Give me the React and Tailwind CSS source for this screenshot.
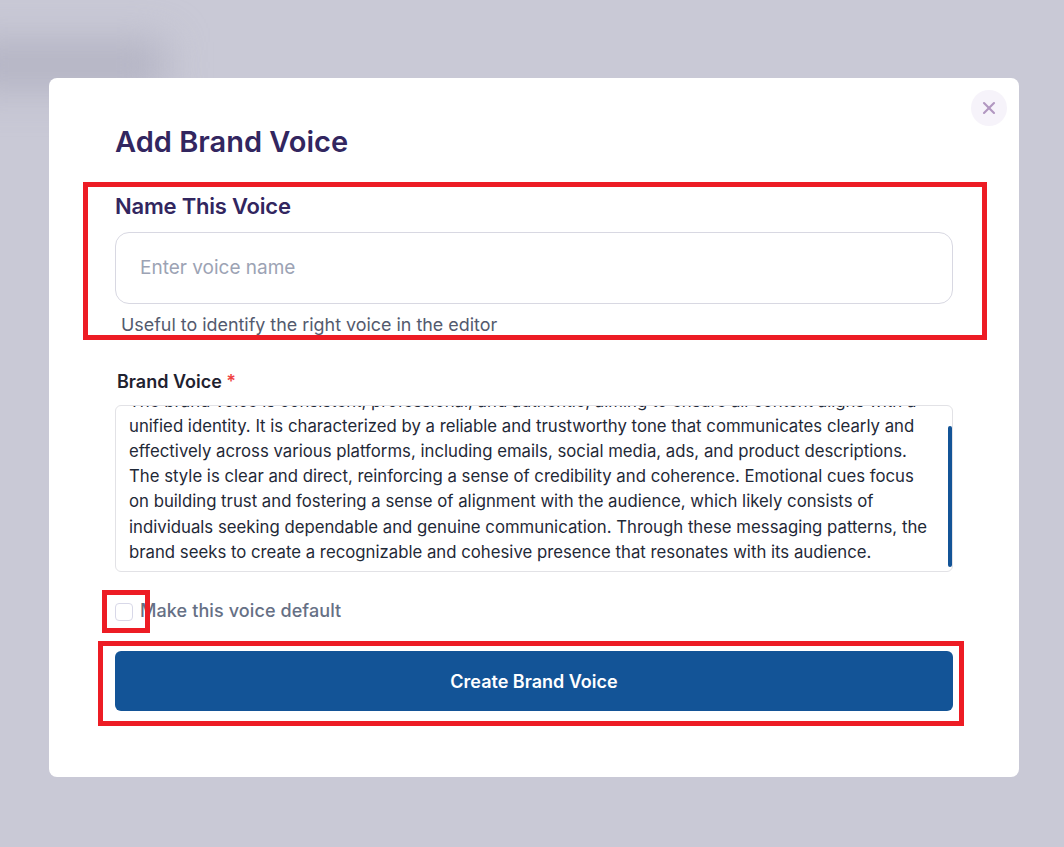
import React from "react";
import { X } from "lucide-react";

const BRAND_VOICE_TEXT =
  "The brand voice is consistent, professional, and authentic, aiming to ensure all content aligns with a unified identity. It is characterized by a reliable and trustworthy tone that communicates clearly and effectively across various platforms, including emails, social media, ads, and product descriptions. The style is clear and direct, reinforcing a sense of credibility and coherence. Emotional cues focus on building trust and fostering a sense of alignment with the audience, which likely consists of individuals seeking dependable and genuine communication. Through these messaging patterns, the brand seeks to create a recognizable and cohesive presence that resonates with its audience.";

const App = () => {
  return (
    <div className="relative h-[847px] w-full overflow-hidden bg-[#c9c9d6] font-['Inter',sans-serif] pl-[49px] pt-[78px]">
      {/* blurred page behind the overlay */}
      <div className="absolute left-[-40px] top-[42px] h-[46px] w-[205px] bg-[#b2b2c2] blur-[20px]" />

      <div className="relative w-[970px] h-[699px] bg-white rounded-lg px-[66px] pt-[46px]">
        <button className="absolute right-3 top-3 w-9 h-9 rounded-full bg-[#f6f3fa] flex items-center justify-center text-[#b197c0]">
          <X size={20} strokeWidth={2.5} />
        </button>

        <h1 className="text-[29px] leading-[36px] font-semibold text-[#32265f]">Add Brand Voice</h1>

        {/* annotated section */}
        <div className="relative mt-[31px]">
          <div className="absolute left-[-32px] right-[-34px] top-[-9px] h-[158px] border-[5px] border-[#ed1c24]" />
          <h2 className="text-[22px] leading-[30px] font-semibold text-[#32265f] tracking-[-0.2px]">Name This Voice</h2>
          <div className="mt-[11px] h-[72px] rounded-[14px] border border-[#d8d8e2] flex items-center px-6 text-[19px] text-[#9ca3b4]">
            Enter voice name
          </div>
          <p className="mt-[9px] ml-[6px] text-[17.9px] leading-[24px] text-[#535a6e]">Useful to identify the right voice in the editor</p>
        </div>

        <label className="block mt-[33px] ml-[2px] text-[18px] leading-[24px] font-semibold text-[#1f2230]">
          Brand Voice <span className="text-[#ef4444]">*</span>
        </label>

        <div className="relative mt-[11px] h-[167px] rounded-md border border-[#e2e2e6] overflow-hidden flex flex-col justify-end pl-[13px] pr-[22px] pb-[6px]">
          <p className="shrink-0 text-[16.75px] leading-[25.2px] text-[#1f2937]">{BRAND_VOICE_TEXT}</p>
          <div className="absolute right-0 top-[20px] bottom-[4px] w-[4px] rounded-sm bg-[#135497]" />
        </div>

        <div className="relative mt-[30px] flex items-center gap-[7px] h-[20px]">
          <span className="w-[18px] h-[18px] rounded-[4px] border border-[#d8d8e8] bg-white" />
          <span className="mb-[4px] text-[18px] tracking-[0.1px] font-medium text-[#667085]">Make this voice default</span>
          <div className="absolute left-[-13px] top-[-12px] w-[48px] h-[43px] border-[5px] border-[#ed1c24]" />
        </div>

        <div className="relative mt-[29px]">
          <button className="w-full h-[60px] rounded-md bg-[#135497] text-white text-[18px] font-semibold">Create Brand Voice</button>
          <div className="absolute left-[-17px] right-[-11px] top-[-10px] h-[85px] border-[5px] border-[#ed1c24]" />
        </div>
      </div>
    </div>
  );
};

export default App;
